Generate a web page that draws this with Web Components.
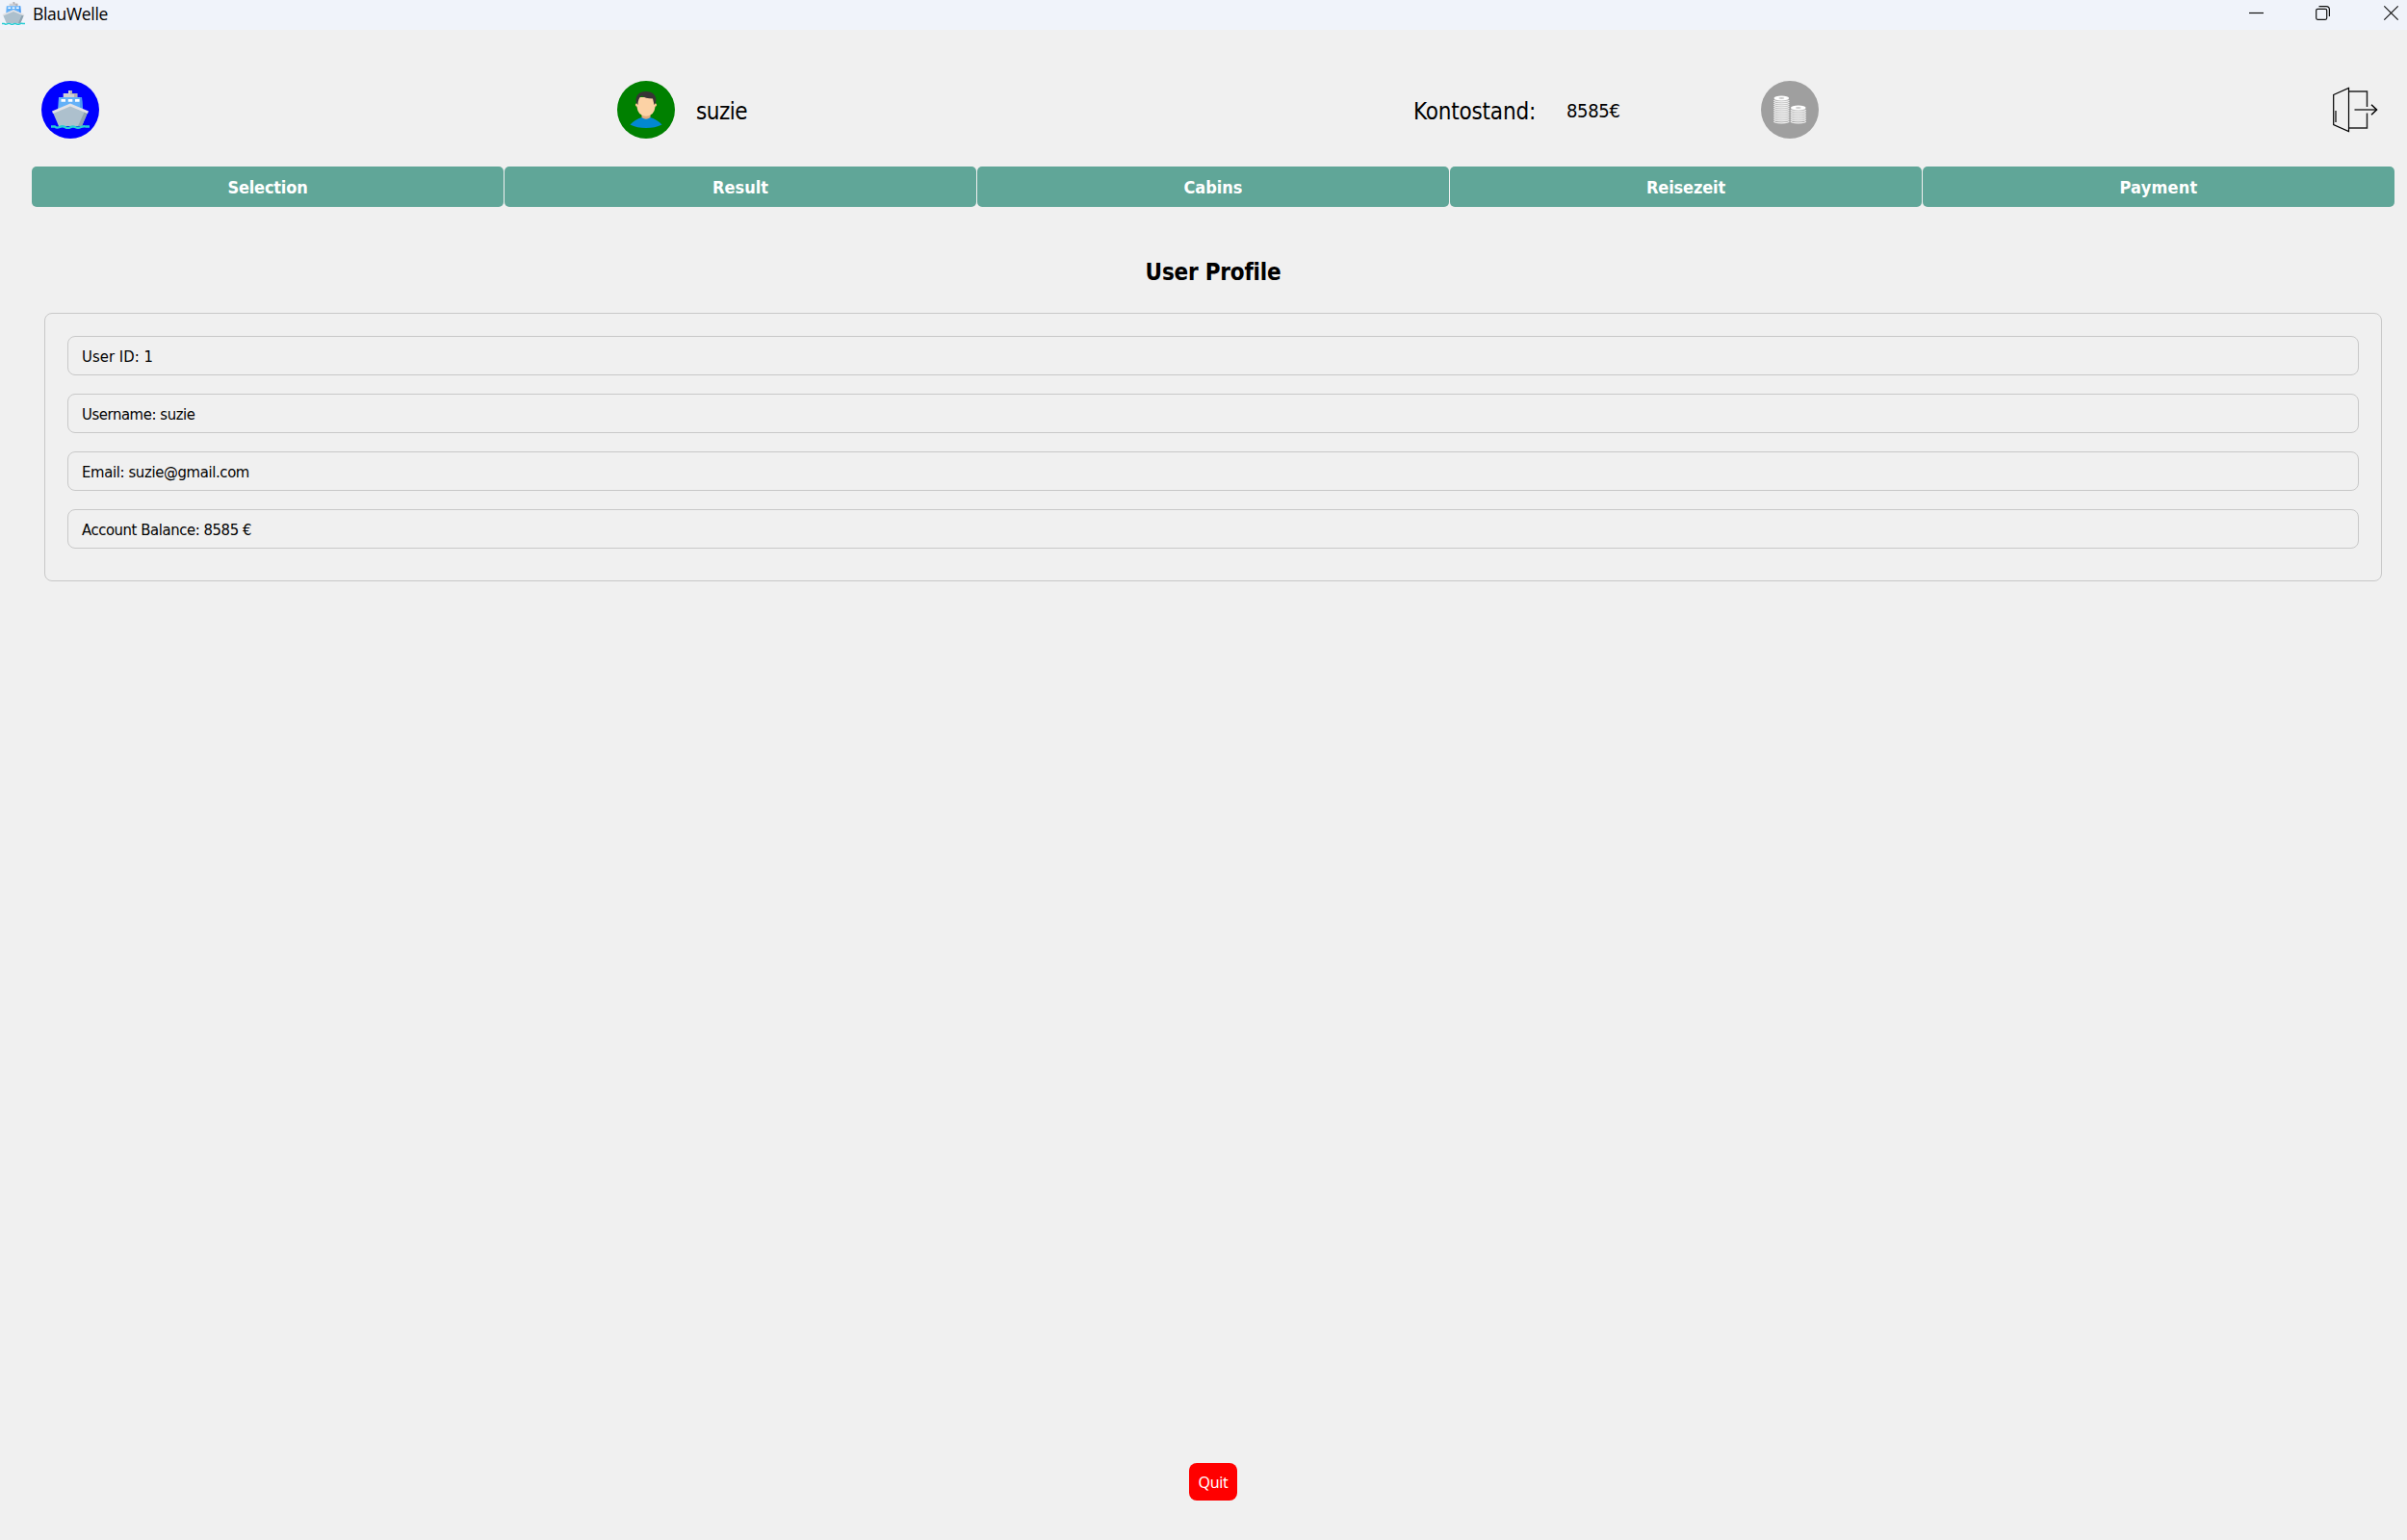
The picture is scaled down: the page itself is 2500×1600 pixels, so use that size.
<!DOCTYPE html>
<html lang="de"><head><meta charset="utf-8"><title>BlauWelle</title>
<style>
html,body{margin:0;height:100%;background:#f0f0f0}
body{font-family:"DejaVu Sans Condensed","DejaVu Sans",sans-serif;font-stretch:condensed;color:#000}
</style></head><body>
<blau-window></blau-window>
<script>
const define=(name,html,setup)=>customElements.define(name,class extends HTMLElement{
  constructor(){super();this.attachShadow({mode:'open'}).innerHTML=html;}
  connectedCallback(){if(setup)setup(this);}
});

/* Text tracked to a given advance width. */
define('fit-text',`<style>:host{display:inline-block;white-space:pre;line-height:1}</style><slot></slot>`,el=>{
  const s=el.textContent,w=+el.getAttribute('w'),size=+el.getAttribute('size');
  el.style.fontSize=size+'px';
  const r=document.createRange();r.selectNodeContents(el);
  const natural=r.getBoundingClientRect().width;
  const gap=(w-natural)/s.length;
  el.style.letterSpacing=gap.toFixed(3)+'px';
});

define('ship-icon',`<style>:host{display:block}svg{display:block;width:100%;height:100%}</style>
<svg viewBox="0 0 40 40">
<path fill="#d0d0d4" d="M18 0h4v3h5.300v4H12.700V3H18z"/><path fill="#b0afb5" d="M20 0h2v3h5.300v4H24V4h-4z"/>
<path fill="#64b1f8" d="M8 7h24l1 14H7z"/><path fill="#4a98f2" d="M30 7h2l1 14h-3z"/>
<path fill="#fff" d="M10.500 9h4.500v2.700h-4.500zM17.800 9h4.500v2.700h-4.500zM25 9h4.500v2.700H25z"/>
<path fill="#adc0cd" d="M20 15L2 23l6 14h24l6-14z"/><path fill="#8ea3b1" d="M35 21.500l3 1.500-6 14h-4z"/>
<path fill="#e2e2e6" d="M20 13.500L1 21.500l1 2.500 18-7.500 18 7.500 1-2.500z"/>
<path fill="none" stroke="#27cdd5" stroke-width="2.400" d="M0 37.500h4q2 2 5 .5 3-1.500 6 .3 2.500 1.500 5 0t5-.3q3 1.500 6 0 3-1.300 5-.5h4"/>
</svg>`);

define('user-icon',`<style>:host{display:block}svg{display:block;width:60px;height:60px}</style>
<svg viewBox="0 0 60 60"><circle cx="30" cy="30" r="30" fill="#008000"/>
<path fill="#e0aa7d" d="M25.500 34h9v6l-4.500 3-4.500-3z"/>
<path fill="#0288d1" d="M13.500 45.500q5-5.500 12-7.500 4.500 3.500 9 0 7 2 12 7.500-7 3.500-16.500 3.500t-16.500-3.500z"/>
<circle cx="20.700" cy="25" r="1.800" fill="#fbc183"/><circle cx="39.300" cy="25" r="1.800" fill="#fbc183"/>
<path fill="#fcd2a5" d="M20.500 17h19v10q-1 9.500-9.500 9.700-8.500-.2-9.500-9.700z"/>
<path fill="#373535" d="M20 23c-2-7.500 3-12 10-12s12 4.500 10 12l-1.500 2-1.500-6.500q-8 0-11.500-3-4 2.500-4 9.500z"/></svg>`);

define('coins-icon',`<style>:host{display:block}svg{display:block;width:60px;height:60px}</style><svg viewBox="0 0 60 60"></svg>`,el=>{
  const stack=(x,top,n)=>{
    let o=`<path fill="#bdbdbd" d="M${x+.5} ${top}h14.500v${n*2}h-14.500z"/>`;
    for(let i=n;i>0;i--)o+=`<path fill="none" stroke="#f2f2f2" stroke-width="1.200" d="M${x} ${top+i*2}q0 1.800 7.800 1.800t7.800-1.800"/>`;
    return o+`<ellipse cx="${x+7.800}" cy="${top}" rx="7.800" ry="2.500" fill="#fff"/><ellipse cx="${x+7.800}" cy="${top}" rx="3" ry=".8" fill="#bbb"/>`;
  };
  el.shadowRoot.querySelector('svg').innerHTML='<circle cx="30" cy="30" r="30" fill="#9f9f9f"/>'+stack(13.500,18,12)+stack(31,28,7);
});

define('exit-icon',`<style>:host{display:block}svg{display:block;width:48px;height:48px}</style>
<svg viewBox="0 0 48 48" fill="none" stroke="#000"><path stroke-width="1.200" d="M1.700 8.500L17.500 1.500V46.500L1.700 39.500z"/><path stroke="#444" stroke-width="1.700" d="M4 25v12"/>
<path stroke-width="1.500" stroke="#222" d="M18 5H36.500V21M36.500 27.500V43H18"/><path stroke="#444" stroke-width="1.700" d="M23.500 24H46"/><path stroke-width="1.500" d="M41 18.800L46.500 24 41 29.200"/></svg>`);

define('title-bar',`<style>
:host{display:flex;height:31px;background:#f0f3fa;align-items:flex-start;justify-content:space-between}
.l{display:flex;gap:8px;padding:2px 0 0 2px}ship-icon{width:24px;height:24px}
fit-text{font-family:"Open Sans","Noto Sans",sans-serif;font-stretch:normal;padding-top:4px}
svg{width:170px;height:31px;display:block}</style>
<div class="l"><ship-icon></ship-icon><fit-text w="78" size="17.5">BlauWelle</fit-text></div>
<svg viewBox="-10 0 170 31" fill="none" stroke="#111" stroke-width="1.200"><path d="M-4 13.500H11"/><rect x="65.700" y="9.300" width="11" height="11" rx="1.500"/><path d="M68.500 6.600h7.500q3.400 0 3.400 3.400v7"/><path d="M136.300 6.300L150.700 20.700M150.700 6.300L136.300 20.700"/></svg>`);

define('top-header',`<style>
:host{display:flex;align-items:center;height:60px;padding:53px 30px 0 43px}
.ship{width:60px;height:60px;border-radius:50%;background:#00f;display:flex;align-items:center;justify-content:center}
ship-icon{width:40px;height:40px}user-icon{margin-left:538px}
fit-text{padding-top:4px}.v{padding-top:2px}.n{margin-left:22px}.k{margin-left:692px}.v{margin-left:32px}coins-icon{margin-left:146px}exit-icon{margin-left:auto}</style>
<div class="ship"><ship-icon></ship-icon></div><user-icon></user-icon><fit-text class="n" w="53" size="24">suzie</fit-text>
<fit-text class="k" w="127" size="24">Kontostand:</fit-text><fit-text class="v" w="55.500" size="20">8585€</fit-text><coins-icon></coins-icon><exit-icon></exit-icon>`);

define('nav-tab',`<style>:host{flex:1;display:flex;box-sizing:border-box;padding-top:1.500px;height:42px;align-items:center;justify-content:center;background:#60a698;border-radius:5px;color:#fff;font-weight:700}</style><slot></slot>`);
define('nav-tabs',`<style>:host{display:flex;gap:1px;margin:29px 13px 0 33px}</style><slot></slot>`);

define('profile-row',`<style>:host{display:flex;box-sizing:border-box;height:41px;border:1px solid #c8c8c8;border-radius:8px;align-items:center;padding:3px 0 0 14px}</style><slot></slot>`);
define('profile-card',`<style>:host{display:flex;flex-direction:column;gap:19px;box-sizing:border-box;height:279px;margin:0 26px 0 46px;border:1px solid #c8c8c8;border-radius:8px;padding:23px}</style><slot></slot>`);
define('quit-button',`<style>:host{display:flex;width:50px;height:39px;margin:auto 0 41px 1235px;border-radius:8px;background:red;color:#fff;align-items:center;justify-content:center;font-family:"Noto Sans",sans-serif;font-stretch:normal}</style><slot></slot>`);

define('blau-window',`<style>:host{display:flex;flex-direction:column;height:1600px;width:2500px}
h1{font-weight:700;font-size:24px;line-height:24px;margin:56px 0 30px 20px;display:flex;justify-content:center}</style>
<title-bar></title-bar><top-header></top-header>
<nav-tabs>
<nav-tab><fit-text w="83" size="18">Selection</fit-text></nav-tab><nav-tab><fit-text w="58" size="18">Result</fit-text></nav-tab><nav-tab><fit-text w="61" size="18">Cabins</fit-text></nav-tab><nav-tab><fit-text w="82" size="18">Reisezeit</fit-text></nav-tab><nav-tab><fit-text w="81" size="18">Payment</fit-text></nav-tab>
</nav-tabs>
<h1><fit-text w="140" size="24">User Profile</fit-text></h1>
<profile-card>
<profile-row><fit-text w="74" size="16.5">User ID: 1</fit-text></profile-row>
<profile-row><fit-text w="117.500" size="16.5">Username: suzie</fit-text></profile-row>
<profile-row><fit-text w="174" size="16.5">Email: suzie@gmail.com</fit-text></profile-row>
<profile-row><fit-text w="176" size="16.5">Account Balance: 8585 €</fit-text></profile-row>
</profile-card>
<quit-button><fit-text w="31" size="16">Quit</fit-text></quit-button>`);
</script></body></html>
